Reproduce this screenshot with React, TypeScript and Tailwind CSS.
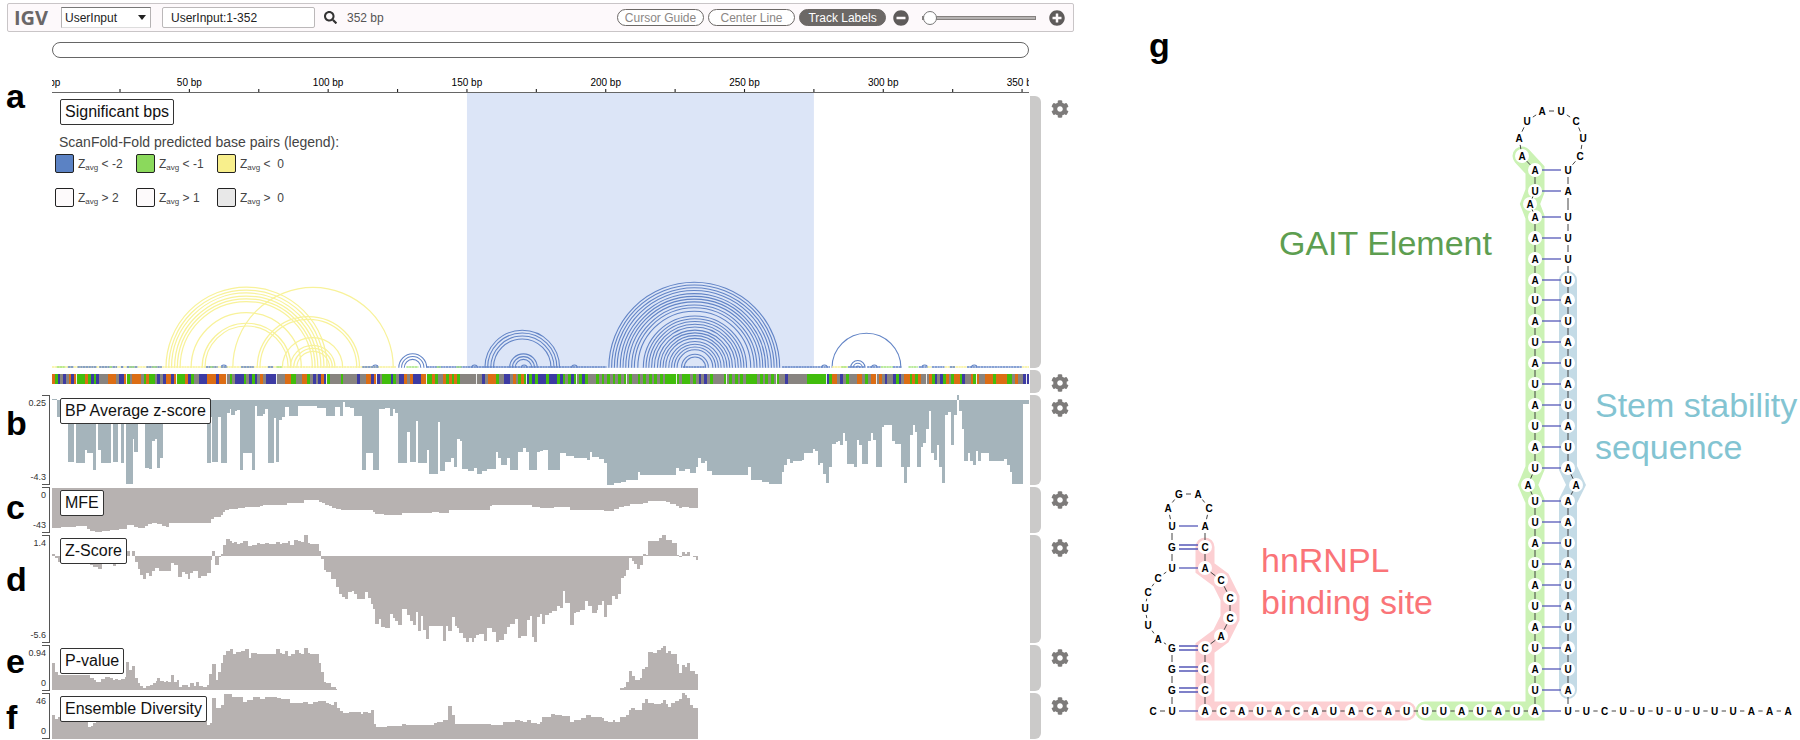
import type { ReactNode } from "react";
import { FaCog, FaMinusCircle, FaPlusCircle, FaSearch } from "react-icons/fa";

// Traces are sampled in two tiles, x starts again from 0 in the second one
const TILE = 1568;
const X0 = 151;
const WIDTH = 2837;
const BP = WIDTH / 352;

const BLUE = "#6284c6";
const YELLOW = "#f8f29a";
const GREEN = "#a5e57f";

const STRUCTURE =
  "CUGGGAUUCCUGUAGACACACCCACCCACAUACAUACAUUUAUAUA" +
  "UAUAUAUAUUAUAUAUAUAUAAAAAUA" +
  "AAUAUCUC" +
  "UAUUUUAUAUAUAUAAAAUAUAUAUAU" +
  "UCUUUUUUUAAA";

const SEQUENCE =
  "GACUCUGCG" +
  "AAAGACACUUUGGGUCCG" +
  "AUGGGUAGAAUCUCGGCG" +
  "AAAGCAUUCCCGGGCGGG" +
  "UAUCCCAUCACUGUCCCC" +
  "UUUGGAAUUGGAUCUCGC" +
  "AUUUUAUUUUUCUUGGCG" +
  "CUAAACAUCCGUGCCCGG" +
  "AAGAUUGAGAGAUUUUUU" +
  "UU" +
  STRUCTURE +
  "AAAACAGGUCUAUUUGGUAUGGUGUCUUCACUGGAGAGUUUGACUCAGUAGGACUUGAGUUGGGAGGGGAAUGUUCC";

const BASE_COLORS: Record<string, string> = {
  A: "#41bd0c",
  C: "#3d3ba3",
  G: "#dc6d14",
  U: "#888480",
};

const zAverage = [
  "151,57 165,110 175,110 197,245 214,110 222,248 246,210 254,218 270,271 278,110 286,210 294,250 322,110 327,246 343,110 351,250 359,110 367,312 385,178 390,217 400,110 421,264 432,268 442,183 450,178 456,263 466,233 474,100 602,250 612,110 617,245 634,112 641,250 659,98 667,86 672,104 683,93 688,90 697,271 706,218 732,271 740,78 747,107 764,103 770,88 778,250 795,114 802,247 811,120 819,110 829,80 840,108 866,79 920,83 947,108 972,80 987,108 995,67 1003,80 1015,84 1028,107 1052,271 1063,218 1084,271 1101,87 1118,84 1132,108 1140,86 1148,100 1156,250 1183,155 1190,246 1208,122 1213,250 1240,210 1245,283 1271,126 1277,272 1293,246 1311,234 1318,262 1327,177 1335,182 1342,266 1360,273 1376,265 1384,283 1400,272 1415,268 1440,215 1447,233 1455,256 1472,235 1480,271 1504,217 1520,205 1528,215 1536,271 1560,215",
  "0,214 10,211 23,270 58,219 75,228 100,234 137,240 145,217 152,230 170,238 187,248 195,314 215,310 235,305 250,300 284,277 290,285 396,264 403,274 420,267 435,279 452,262 460,234 468,248 478,243 484,273 500,285 605,262 614,301 645,306 665,313 703,276 710,256 718,236 726,249 735,243 760,240 768,220 792,208 798,214 806,256 814,248 822,282 830,308 838,262 848,193 860,187 866,184 870,194 880,160 885,182 892,252 912,262 920,181 926,194 935,252 952,182 960,160 966,179 975,262 992,142 1000,135 1022,184 1030,192 1048,262 1057,308 1066,262 1074,164 1082,134 1088,155 1096,262 1105,200 1113,188 1121,146 1130,94 1136,218 1143,240 1153,196 1160,262 1168,308 1176,104 1186,97 1193,194 1203,104 1211,45 1218,94 1224,146 1232,244 1243,218 1250,244 1258,256 1267,214 1272,244 1282,219 1303,244 1348,236 1356,255 1364,275 1371,313 1404,72 1420,60",
];

const mfe = [
  "151,445 178,441 222,437 254,446 262,452 275,457 297,453 320,449 345,446 369,435 390,440 400,443 420,437 430,433 441,430 457,433 470,437 482,440 490,430 498,428 520,430 612,417 620,410 641,405 647,397 653,390 665,388 690,385 710,382 755,378 765,376 834,370 860,368 883,361 925,366 935,370 945,375 955,379 965,383 977,388 990,391 1084,396 1090,402 1115,405 1166,398 1255,396 1275,398 1303,389 1423,378 1430,376 1545,380",
  "0,383 15,385 40,382 88,389 100,391 187,394 200,392 215,387 230,381 245,377 262,373 300,369 315,364 350,363 365,367 378,372 395,378 405,384 413,380 432,384 460,324",
];

const zScore = [
  "151,523 160,535 168,545 262,555 270,562 285,568 297,550 327,558 336,545 367,514 377,527 383,514 391,546 400,566 406,586 414,598 424,578 432,588 442,574 450,565 462,573 497,550 505,556 518,592 528,576 538,582 545,596 553,578 560,574 575,593 585,588 600,578 612,540 617,514 625,556 635,532 641,522 648,495 656,478 667,484 673,490 680,486 688,493 697,490 705,482 720,499 733,494 745,490 755,493 770,488 780,492 800,487 812,493 820,488 835,482 843,494 855,480 865,484 875,487 883,462 893,488 900,492 925,514 932,537 940,570 948,577 962,597 977,622 985,642 993,652 1003,657 1010,637 1022,632 1028,642 1038,657 1060,635 1070,655 1076,672 1084,688 1090,733 1100,717 1106,740 1118,743 1132,703 1142,713 1148,722 1156,735 1167,687 1182,706 1192,722 1200,735 1208,695 1214,753 1222,708 1228,750 1238,777 1246,738 1285,783 1294,738 1302,752 1312,712 1320,738 1328,745 1334,760 1344,775 1352,786 1362,775 1370,787 1376,775 1382,766 1392,762 1405,783 1415,745 1430,755 1440,787 1448,780 1464,763 1472,740 1480,732 1496,716 1504,773 1512,767 1530,720 1538,707 1544,772 1552,787 1560,710",
  "0,703 7,733 14,705 25,698 35,693 50,678 58,685 67,632 73,670 88,735 99,700 105,695 117,691 130,662 138,678 152,698 165,690 168,676 180,664 186,710 196,674 210,648 217,657 227,643 234,594 244,588 250,570 258,533 266,544 273,552 283,568 290,555 298,521 308,525 313,483 347,474 355,462 366,480 382,488 397,525 405,530 411,517 420,522 428,516 436,528 444,530 452,541 460,527",
];

const pValue = [
  "151,310 160,335 168,346 262,355 272,361 280,366 292,357 305,352 320,355 327,360 335,356 343,361 350,356 362,352 367,306 376,330 383,317 391,355 400,368 407,378 415,384 424,377 436,375 445,368 453,362 456,355 465,362 475,367 482,362 488,366 497,346 505,366 513,360 520,382 528,375 545,380 553,368 562,377 568,366 577,377 590,382 600,375 608,343 617,312 627,360 633,337 641,310 648,285 656,273 668,268 676,283 686,277 700,273 712,266 722,295 730,280 747,283 800,268 812,278 820,283 828,272 836,287 845,282 857,270 867,280 875,283 883,264 893,279 900,282 925,309 932,337 940,366 948,370 962,382 975,387 980,391",
  "0,391 233,383 245,380 249,366 258,333 266,347 275,361 290,355 297,326 305,322 313,277 327,279 340,270 350,265 356,257 365,278 372,272 380,283 397,312 405,338 411,315 420,320 428,310 436,333 450,342 460,391",
];

const diversity = [
  "151,465 160,478 168,470 256,502 265,498 270,490 280,482 600,495 610,490 617,414 627,444 641,434 650,403 675,411 706,427 718,421 735,412 755,416 770,411 803,415 815,418 843,428 880,426 893,431 908,426 922,423 948,428 955,432 962,435 970,427 980,444 988,452 995,459 1012,455 1048,461 1055,456 1068,460 1076,450 1085,493 1093,502 1125,498 1166,492 1180,495 1260,490 1270,487 1285,481 1300,437 1312,465 1320,491 1425,494 1460,487 1480,485 1495,479 1510,484 1520,487 1530,480 1542,488 1560,493",
  "0,487 7,470 32,461 45,464 65,467 88,486 98,481 120,474 135,466 148,470 180,475 187,482 197,487 212,480 218,486 233,471 250,466 258,450 265,445 275,450 295,430 305,417 313,428 330,432 350,428 356,419 365,432 373,440 380,428 392,423 403,417 411,400 420,406 428,415 436,435 444,445 460,536",
];

const yellowArcs = [
  [482, 950], [490, 941], [498, 932], [507, 923], [515, 915], [523, 907],
  [555, 875], [587, 845], [595, 837], [676, 1142], [747, 1044], [755, 1036],
  [820, 995], [843, 973], [853, 965], [862, 957],
];

const blueArcs = [
  [1158, 1239], [1166, 1231], [1174, 1222],
  [1408, 1625], [1416, 1617], [1425, 1609], [1433, 1600],
  [1480, 1560], [1488, 1552], [1496, 1544], [1514, 1530],
  [2416, 2616], [2470, 2512], [2478, 2504], [2486, 2496],
  [642, 658], [1082, 1098], [1370, 1386], [1660, 1676], [2386, 2402], [2531, 2547], [2677, 2693], [2821, 2837],
  ...[248, 240, 232, 224, 215, 207, 199, 191, 182, 174, 164].map((r) => [2016 - r, 2016 + r]),
  ...[150, 142, 134, 126, 118, 109, 101, 93, 85, 76, 68, 60, 52, 39, 31].map((r) => [2018 - r, 2018 + r]),
];

const baseLine: [number, number, string][] = [
  [151, 1150, YELLOW], [165, 190, GREEN], [197, 214, BLUE], [225, 280, BLUE], [288, 340, BLUE], [318, 325, GREEN],
  [351, 358, BLUE], [368, 400, BLUE], [375, 390, GREEN], [425, 470, BLUE], [442, 455, GREEN], [598, 632, BLUE],
  [610, 620, GREEN], [642, 660, BLUE], [700, 737, BLUE], [778, 793, BLUE], [803, 818, GREEN], [1052, 1100, BLUE],
  [1180, 1215, GREEN], [1239, 1761, BLUE], [1268, 1280, GREEN], [1325, 1340, GREEN], [1983, 2048, BLUE],
  [2271, 2410, BLUE], [2416, 2462, YELLOW], [2443, 2458, GREEN], [2462, 2512, BLUE], [2518, 2558, BLUE],
  [2558, 2593, GREEN], [2593, 2618, BLUE], [2638, 2665, GREEN], [2668, 2693, BLUE], [2693, 2705, YELLOW],
  [2706, 2743, BLUE], [2743, 2808, YELLOW], [2758, 2773, BLUE], [2808, 2968, BLUE], [2968, 2988, YELLOW],
];

const stepPath = (tiles: string[], base: number) => {
  let d = `M${X0} ${base}`;
  tiles.forEach((tile, i) => {
    tile.split(" ").forEach((point) => {
      const [x, y] = point.split(",").map(Number);
      d += `H${x + i * TILE}V${y}`;
    });
  });
  return d + `V${base}Z`;
};

const arcPath = ([x1, x2]: number[]) => {
  const r = (x2 - x1) / 2;
  return `M${x1} 458A${r} ${r * 1.033} 0 0 1 ${x2} 458`;
};

type TrackProps = {
  letter?: string;
  letterClass?: string;
  label?: string;
  max?: string;
  min?: string;
  heightClass: string;
  children: ReactNode;
};

const Track = ({ letter, letterClass = "", label, max, min, heightClass, children }: TrackProps) => {
  return (
    <div className={`flex ${heightClass}`}>
      <div className="relative flex w-[52px] shrink-0 justify-between pl-[6px] pr-[6px]">
        <span className={`text-[34px] font-bold leading-8 text-black ${letterClass}`}>{letter}</span>
        {max && (
          <>
            <div className="-ml-4 flex flex-col justify-between py-[3px] text-right text-[9px] leading-[10px] text-[#333]">
              <span>{max}</span>
              <span>{min}</span>
            </div>
            <span className="absolute inset-y-0 right-[2px] w-2 border-y border-r border-[#555]" />
          </>
        )}
      </div>
      <div className="relative min-w-0 flex-1">
        {children}
        {label && (
          <span className="absolute left-2 top-[3px] rounded-xs border border-[#333] bg-white px-1 text-base leading-6 text-[#111]">
            {label}
          </span>
        )}
      </div>
      <div className="ml-px w-[11px] shrink-0 rounded-r-md bg-[#cbcac9]" />
      <div className="w-[39px] shrink-0 pl-[10px] pt-[4px]">
        <button aria-label={`${label ?? "Sequence"} settings`} className="block text-[#7d7b7a]">
          <FaCog size={18} />
        </button>
      </div>
    </div>
  );
};

type WigProps = { tiles: string[]; base: number; top: number; height: number; color: string };

const Wig = ({ tiles, base, top, height, color }: WigProps) => (
  <svg
    className="block h-full w-full"
    viewBox={`${X0} ${top} ${WIDTH} ${height}`}
    preserveAspectRatio="none"
    shapeRendering="crispEdges"
  >
    <path d={stepPath(tiles, base)} fill={color} />
  </svg>
);

const Toolbar = () => {
  const pill = "h-[17px] w-[87px] rounded-full border border-[#6c6866] text-xs leading-[14px] whitespace-nowrap";
  return (
    <div className="ml-[7px] mr-[6px] flex h-[29px] items-center rounded-xs border border-[#c9c5c7] bg-[#fdf9fb] pl-[6px] pr-2">
      <a href="#" className="w-[47px] font-['Open_Sans',sans-serif] text-xl font-bold leading-6 text-[#6a6768]">
        IGV
      </a>
      <div className="relative">
        <select
          aria-label="Genome"
          className="block h-[21px] w-[90px] appearance-none border border-t-[#777] border-x-[#b5b2b3] border-b-[#ddd] bg-white px-[3px] text-xs text-[#222]"
        >
          <option>UserInput</option>
        </select>
        <svg className="pointer-events-none absolute right-[5px] top-2 h-[5px] w-2" viewBox="0 0 8 5">
          <path d="M0 0H8L4 5Z" fill="#222" />
        </svg>
      </div>
      <input
        aria-label="Locus"
        defaultValue="UserInput:1-352"
        className="ml-[11px] h-[21px] w-[153px] min-w-0 rounded-xs border border-[#bbb8b9] bg-white px-2 text-xs text-[#222]"
      />
      <button aria-label="Search" className="ml-[9px] text-[#333]">
        <FaSearch size={13} />
      </button>
      <span className="ml-[10px] whitespace-nowrap text-xs text-[#555]">352 bp</span>
      <div className="ml-auto flex items-center gap-1">
        <button className={`${pill} bg-white text-[#8b8785]`}>Cursor Guide</button>
        <button className={`${pill} bg-white text-[#8b8785]`}>Center Line</button>
        <button className={`${pill} bg-[#6c6866] text-white`}>Track Labels</button>
      </div>
      <button aria-label="Zoom out" className="ml-[7px] text-[#5e5b5a]">
        <FaMinusCircle size={16} />
      </button>
      <input
        type="range"
        aria-label="Zoom"
        defaultValue={0}
        className="ml-[13px] h-4 w-[114px] min-w-0 appearance-none bg-transparent [&::-webkit-slider-runnable-track]:h-1 [&::-webkit-slider-runnable-track]:border [&::-webkit-slider-runnable-track]:border-[#85817f] [&::-webkit-slider-runnable-track]:bg-[#b5b2b1] [&::-webkit-slider-thumb]:-mt-[6px] [&::-webkit-slider-thumb]:size-[14px] [&::-webkit-slider-thumb]:appearance-none [&::-webkit-slider-thumb]:rounded-full [&::-webkit-slider-thumb]:border [&::-webkit-slider-thumb]:border-[#777] [&::-webkit-slider-thumb]:bg-white"
      />
      <button aria-label="Zoom in" className="ml-[13px] text-[#5e5b5a]">
        <FaPlusCircle size={16} />
      </button>
    </div>
  );
};

const Ruler = () => (
  <div className="ml-[52px] mr-[51px] mt-[18px] overflow-hidden">
    <div className="flex text-[10px] leading-[13px] text-black" style={{ marginLeft: `${(-25.5 / 352) * 100}%` }}>
      {[0, 50, 100, 150, 200, 250, 300, 350].map((n) => (
        <span key={n} className="shrink-0 whitespace-nowrap text-center" style={{ width: `${(50 / 377.5) * 100}%` }}>
          {n} bp
        </span>
      ))}
    </div>
    <svg className="block h-[3px] w-full" viewBox="0 0 352 3" preserveAspectRatio="none">
      {Array.from({ length: 14 }, (_, i) => (
        <path key={i} d={`M${(i + 1) * 25 - 0.5} 0V3`} stroke="#222" strokeWidth="0.4" />
      ))}
    </svg>
    <div className="h-px bg-[#666]" />
  </div>
);

const legend = [
  { color: "bg-[#5b82c4]", text: "< -2" },
  { color: "bg-[#8bd95c]", text: "< -1" },
  { color: "bg-[#f8ef8c]", text: "<  0" },
  { color: "bg-[#fdfafb]", text: "> 2" },
  { color: "bg-[#fdfafb]", text: "> 1" },
  { color: "bg-[#e8e8e8]", text: ">  0" },
];

const Legend = () => (
  <div className="absolute left-[3px] top-[38px] text-[#444]">
    <p className="pl-1 text-sm leading-4">ScanFold-Fold predicted base pairs (legend):</p>
    <div className="mt-1 grid w-[243px] grid-cols-3 gap-y-[15px]">
      {legend.map(({ color, text }) => (
        <div key={color + text} className="flex h-[19px] items-center gap-1">
          <span className={`size-[19px] rounded-xs border border-[#222] ${color}`} />
          <span className="whitespace-pre text-xs leading-4">
            Z<sub className="text-[8px] leading-none">avg</sub> {text}
          </span>
        </div>
      ))}
    </div>
  </div>
);

const Browser = () => (
  <section className="w-3/5 pt-[3px]">
    <Toolbar />
    <div className="ml-[52px] mr-[51px] mt-[10px] h-4 rounded-lg border border-[#666] bg-white" />
    <Ruler />
    <div className="mt-[3px] flex flex-col gap-[2px]">
      <Track letter="a" letterClass="-mt-4" label="Significant bps" heightClass="h-[272px]">
        <svg
          className="block h-full w-full overflow-visible"
          viewBox={`${X0} -357 ${WIDTH} 816`}
          preserveAspectRatio="none"
          fill="none"
        >
          <rect x={X0 + 149.5 * BP} y="-366" width={125 * BP} height="825" fill="#dce5f7" />
          <g stroke={YELLOW} strokeWidth="3.6">
            {yellowArcs.map((arc) => (
              <path key={arc.join()} d={arcPath(arc)} />
            ))}
          </g>
          <g stroke={BLUE} strokeWidth="3.2">
            {blueArcs.map((arc) => (
              <path key={arc.join()} d={arcPath(arc)} />
            ))}
          </g>
          {baseLine.map(([x1, x2, color]) => (
            <path key={x1 + color} d={`M${x1} 456H${x2}`} stroke={color} strokeWidth="5" strokeDasharray="7 1" />
          ))}
        </svg>
        <Legend />
      </Track>
      <Track heightClass="h-[23px]">
        <svg
          className="block h-full w-full"
          viewBox="0 0 352 23"
          preserveAspectRatio="none"
          shapeRendering="crispEdges"
        >
          {SEQUENCE.slice(0, 352)
            .split("")
            .map((base, i) => (
              <rect key={i} x={i} y="4" width="1.05" height="10" fill={BASE_COLORS[base]} />
            ))}
          {Array.from({ length: 20 }, (_, i) => (
            <rect key={i} x={i * 18 + 8.8} y="4" width="0.36" height="10" fill="#eee" />
          ))}
        </svg>
      </Track>
      <Track letter="b" letterClass="pt-3" label="BP Average z-score" max="0.25" min="-4.3" heightClass="h-[90px]">
        <Wig tiles={zAverage} base={60} top={45} height={270} color="#a5b4bb" />
      </Track>
      <Track letter="c" letterClass="pt-1" label="MFE" max="0" min="-43" heightClass="h-[46px]">
        <Wig tiles={mfe} base={324} top={321} height={138} color="#b7b2b1" />
      </Track>
      <Track letter="d" letterClass="pt-7" label="Z-Score" max="1.4" min="-5.6" heightClass="h-[108px]">
        <Wig tiles={zScore} base={527} top={465} height={324} color="#b7b2b1" />
      </Track>
      <Track letter="e" label="P-value" max="0.94" min="0" heightClass="h-[46px]">
        <Wig tiles={pValue} base={391} top={255} height={138} color="#b7b2b1" />
      </Track>
      <Track letter="f" letterClass="pt-2" label="Ensemble Diversity" max="46" min="0" heightClass="h-[46px]">
        <Wig tiles={diversity} base={536} top={399} height={138} color="#b7b2b1" />
      </Track>
    </div>
  </section>
);

type Point = [number, number];

const lowerStem = [690, 669, 648, 627, 606, 585, 564, 543, 522, 501];
const upperStem = [468, 447, 426, 405, 384, 363, 342, 321, 300, 280, 259, 238, 217];
const topStem = [191, 170];
const LEFT = 1535;
const RIGHT = 1568;

const column = (x: number, ys: number[]): Point[] => ys.map((y) => [x, y]);

const points: Point[] = [
  [1153, 711], [1172, 711], [1172, 690], [1172, 669], [1172, 648],
  [1158, 639], [1148, 625], [1145, 608], [1148, 592], [1158, 578],
  [1172, 568], [1172, 547], [1172, 526], [1168, 508], [1179, 494], [1198, 494], [1209, 508],
  [1205, 526], [1205, 547], [1205, 568], [1221, 580], [1230, 598], [1230, 618], [1221, 636],
  [1205, 648], [1205, 669], [1205, 690],
  ...Array.from({ length: 19 }, (_, i): Point => [1205 + (i * 330) / 18, 711]),
  ...column(LEFT, lowerStem),
  [1528, 485],
  ...column(LEFT, upperStem),
  [1530, 204],
  ...column(LEFT, topStem),
  [1522, 156], [1519, 138], [1527, 121], [1542, 111], [1561, 111], [1576, 121], [1583, 138], [1580, 156],
  ...column(RIGHT, [...topStem].reverse()),
  ...column(RIGHT, [...upperStem].reverse()),
  [1576, 485],
  ...column(RIGHT, [...lowerStem].reverse()),
  ...Array.from({ length: 13 }, (_, i): Point => [RIGHT + (i * 220) / 12, 711]),
];

const regions = [
  { from: 18, to: 38, color: "#fccfd2", width: 19 },
  { from: 39, to: 73, color: "#cbf2b4", width: 19 },
  { from: points.findIndex(([x, y]) => x === RIGHT && y === 280), to: 106, color: "#c4dbe6", width: 18 },
].map((region) => ({ ...region, nodes: points.slice(region.from, region.to + 1) }));

const shortPairs = [
  { y: 711, strong: false }, { y: 690, strong: true }, { y: 669, strong: true }, { y: 648, strong: true },
  { y: 568, strong: false }, { y: 547, strong: true }, { y: 526, strong: false },
];

const bonds = points.slice(1).map(([x2, y2], i) => {
  const [x1, y1] = points[i];
  const length = Math.hypot(x2 - x1, y2 - y1);
  const t = Math.min(7 / length, 0.42);
  return `M${x1 + (x2 - x1) * t} ${y1 + (y2 - y1) * t}L${x2 - (x2 - x1) * t} ${y2 - (y2 - y1) * t}`;
});

const Structure = () => (
  <section className="w-2/5">
    <svg className="block h-auto w-full" viewBox="1080 0 720 740">
      {regions.map(({ color, width, nodes }) => (
        <g key={color}>
          <polyline
            points={nodes.map((p) => p.join()).join(" ")}
            fill="none"
            stroke={color}
            strokeWidth={width}
            strokeLinecap="round"
          />
          {nodes.map(([x, y]) => (
            <circle key={`${x},${y}`} cx={x} cy={y} r="7" fill="white" />
          ))}
        </g>
      ))}
      <path d={bonds.join("")} stroke="#444" strokeWidth="1" />
      <g stroke="#5558b8" strokeWidth="1.3">
        {shortPairs.map(({ y, strong }) =>
          strong ? (
            <path key={y} d={`M1179 ${y - 2}H1198M1179 ${y + 2}H1198`} />
          ) : (
            <path key={y} d={`M1179 ${y}H1198`} />
          )
        )}
        {[711, ...lowerStem, ...upperStem, ...topStem].map((y) => (
          <path key={y} d={`M1542 ${y}H1561`} />
        ))}
      </g>
      <g fontSize="10" fontWeight="bold" textAnchor="middle" fill="#000">
        {points.map(([x, y], i) => (
          <text key={i} x={x} y={y + 4}>
            {STRUCTURE[i]}
          </text>
        ))}
      </g>
      <text x="1149" y="57" fontSize="34" fontWeight="bold">
        g
      </text>
      <g fontSize="34">
        <text x="1279" y="255" fill="#5d9e50">
          GAIT Element
        </text>
        <g fill="#fa7478">
          <text x="1261" y="572">hnRNPL</text>
          <text x="1261" y="614">binding site</text>
        </g>
        <g fill="#83c4d2">
          <text x="1595" y="417">Stem stability</text>
          <text x="1595" y="459">sequence</text>
        </g>
      </g>
    </svg>
  </section>
);

const App = () => {
  return (
    <main className="flex items-start overflow-hidden bg-white font-['Liberation_Sans',Arial,sans-serif]">
      <Browser />
      <Structure />
    </main>
  );
};

export default App;
